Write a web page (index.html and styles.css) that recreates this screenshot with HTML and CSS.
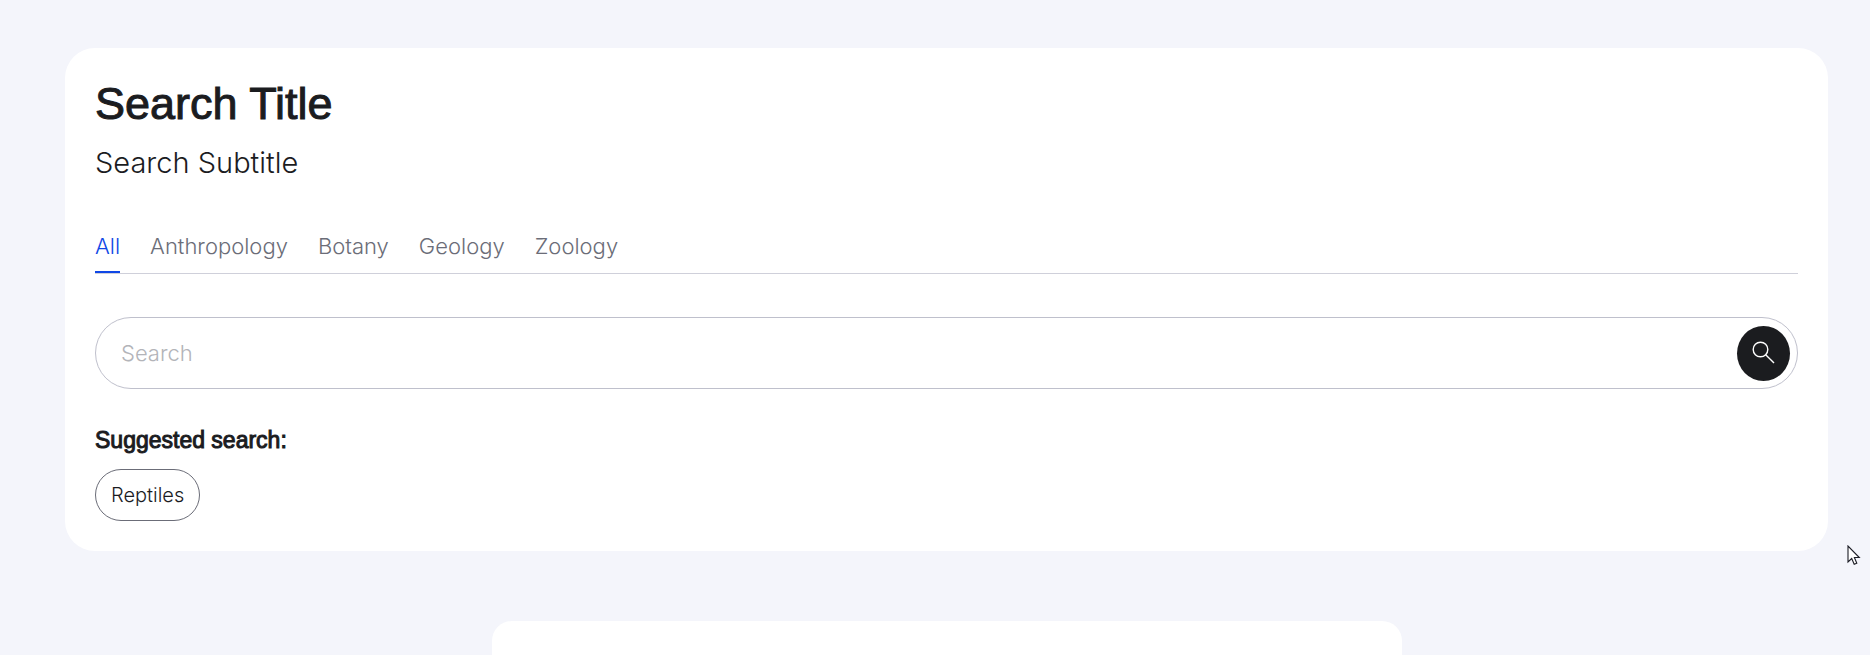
FILE: index.html
```
<!DOCTYPE html>
<html lang="en">
<head>
  <meta charset="UTF-8">
  <meta name="viewport" content="width=device-width, initial-scale=1.0">
  <title>Search Title</title>
  <link rel="stylesheet" href="styles.css">
</head>
<body>
  <main class="page">
    <section class="search-card">
      <h1 class="title">Search Title</h1>
      <p class="subtitle">Search Subtitle</p>

      <nav class="tabs">
        <a class="tab active" href="#all">All</a>
        <a class="tab" href="#anthropology">Anthropology</a>
        <a class="tab" href="#botany">Botany</a>
        <a class="tab" href="#geology">Geology</a>
        <a class="tab" href="#zoology">Zoology</a>
      </nav>

      <form class="search-box" role="search">
        <input class="search-input" type="text" placeholder="Search" aria-label="Search">
        <button class="search-button" type="submit" aria-label="Submit search">
          <svg width="24" height="24" viewBox="0 0 24 24" fill="none" stroke="currentColor" stroke-width="1.4">
            <circle cx="8.500" cy="8.500" r="7.300"/>
            <path d="M13.700 13.700L22 22"/>
          </svg>
        </button>
      </form>

      <h2 class="suggested-title">Suggested search:</h2>
      <div class="suggestions">
        <a class="pill" href="#reptiles">Reptiles</a>
      </div>
    </section>

    <section class="results"></section>
  </main>

  <svg class="cursor" width="14" height="21" viewBox="0 0 14 21" aria-hidden="true">
    <path d="M1 1V17L4.700 13.500L7.200 19.300L9.800 18.200L7.400 12.500H12.300Z" fill="#fff" stroke="#1c1d26" stroke-width="1.1"/>
  </svg>
</body>
</html>
```

FILE: styles.css
```
* {
  box-sizing: border-box;
}
body {
  margin: 0;
  min-height: 100vh;
  background: #f4f5fb;
  color: #1b1c1f;
  font-family: Inter, "Liberation Sans", sans-serif;
  font-weight: 300;
}
.page {
  display: flex;
  flex-direction: column;
  min-height: 100vh;
  padding: 48px 42px 0 65px;
}
.search-card {
  padding: 30px;
  background: #fff;
  border-radius: 30px;
}
.title,
.suggested-title {
  font-family: "Liberation Sans", Arial, sans-serif;
  font-weight: 400;
  -webkit-text-stroke: 1px currentColor;
}
.title {
  margin: 0;
  font-size: 45px;
  line-height: 51px;
}
.subtitle {
  margin: 16px 0 0;
  font-size: 29px;
  line-height: 36px;
}
.tabs {
  display: flex;
  gap: 30px;
  margin-top: 42px;
  border-bottom: 1px solid #cfd0da;
}
.tab {
  padding: 8px 0 10px;
  border-bottom: 2px solid transparent;
  color: #6b6d78;
  font-size: 22px;
  line-height: 30px;
  text-decoration: none;
}
.tab.active {
  color: #0f47e6;
  border-bottom-color: #0f47e6;
}
.search-box {
  display: flex;
  align-items: center;
  margin-top: 43px;
  height: 72px;
  padding: 0 7px 0 25px;
  border: 1px solid #bfc0cc;
  border-radius: 36px;
}
.search-input {
  flex: 1;
  min-width: 0;
  padding: 0;
  border: none;
  outline: none;
  background: none;
  color: inherit;
  font: inherit;
  font-size: 22px;
}
.search-input::placeholder {
  color: #b3b4b9;
}
.search-button {
  display: flex;
  align-items: center;
  justify-content: center;
  width: 53px;
  height: 55px;
  padding: 0;
  border: none;
  border-radius: 50%;
  background: #1b1c1f;
  color: #fff;
  cursor: pointer;
}
.suggested-title {
  margin: 36px 0 0;
  font-size: 23px;
  line-height: 30px;
}
.suggestions {
  display: flex;
  gap: 10px;
  margin-top: 14px;
}
.pill {
  padding: 11px 15px;
  border: 1px solid #6b6d78;
  border-radius: 26px;
  color: inherit;
  font-size: 20px;
  line-height: 28px;
  text-decoration: none;
}
.results {
  flex: 1;
  width: 910px;
  max-width: 100%;
  margin: 70px auto 0;
  background: #fff;
  border-radius: 20px 20px 0 0;
}
/* pointer resting over the page */
.cursor {
  position: absolute;
  left: 1847px;
  top: 545px;
}
```
